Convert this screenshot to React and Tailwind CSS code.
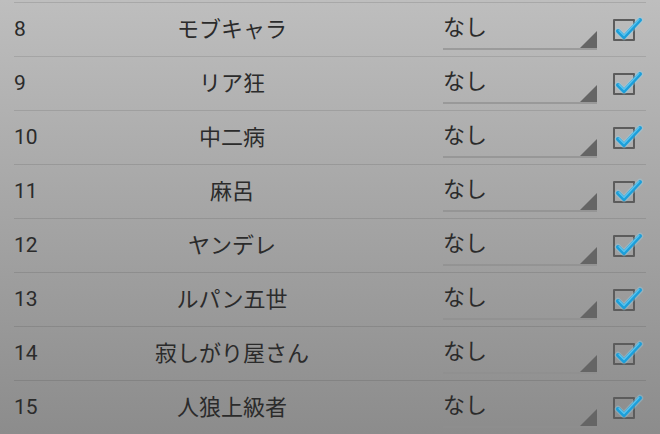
import React from "react";

const rows = [
  ["8", "モブキャラ"],
  ["9", "リア狂"],
  ["10", "中二病"],
  ["11", "麻呂"],
  ["12", "ヤンデレ"],
  ["13", "ルパン五世"],
  ["14", "寂しがり屋さん"],
  ["15", "人狼上級者"],
];

function Check() {
  return (
    <div className="relative w-[22px] h-[22px] border-2 border-[#5c5c5c] rounded-[1px]">
      <svg
        className="absolute -left-[1px] -top-[7px] overflow-visible"
        width="30"
        height="28"
        viewBox="0 0 30 28"
      >
        <path
          d="M4 17 L10 23 L26 6"
          fill="none"
          stroke="#8fd8f5"
          strokeOpacity="0.35"
          strokeWidth="6.5"
          strokeLinecap="round"
          strokeLinejoin="round"
        />
        <path
          d="M4 17 L10 23 L26 6"
          fill="none"
          stroke="#1c9fda"
          strokeWidth="4"
          strokeLinecap="round"
          strokeLinejoin="round"
        />
        <path
          d="M5 16.5 L10 21.5 L25 5.5"
          fill="none"
          stroke="#5cc4ef"
          strokeWidth="1.2"
          strokeLinecap="round"
          strokeLinejoin="round"
        />
      </svg>
    </div>
  );
}

export default function App() {
  return (
    <div
      className="w-[660px] h-[434px] overflow-hidden bg-gradient-to-b from-[#bebebe] to-[#8c8c8c] text-[#2b2b2b]"
      style={{ fontFamily: 'Roboto, "Noto Sans CJK JP", sans-serif' }}
    >
      <div className="px-[14px]">
        <div className="h-[3px] border-b border-[#a3a3a3]/80" />
        {rows.map(([n, name]) => (
          <div
            key={n}
            className="h-[54px] border-b border-black/10 flex items-center"
          >
            <div className="w-[50px] text-[21px] leading-none">{n}</div>
            <div className="w-[336px] text-center text-[22px] leading-none">
              {name}
            </div>
            <div className="ml-[43px] w-[154px] h-[38px] mt-[3px] relative flex items-center border-b-2 border-[#8f8f8f]/70">
              <span className="text-[22px] leading-none -mt-[5px]">なし</span>
              <div
                className="absolute right-0 bottom-0 w-[17px] h-[17px] bg-[#656565]"
                style={{ clipPath: "polygon(100% 0, 100% 100%, 0 100%)" }}
              />
            </div>
            <div className="ml-[16px]">
              <Check />
            </div>
          </div>
        ))}
      </div>
    </div>
  );
}
